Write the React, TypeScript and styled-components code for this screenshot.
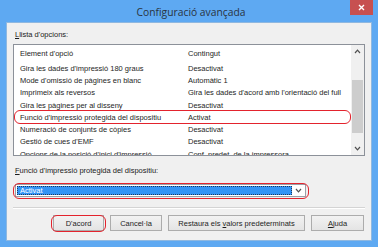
import React from 'react';
import styled, { createGlobalStyle } from 'styled-components';

const GlobalStyle = createGlobalStyle`
  html, body {
    margin: 0;
    padding: 0;
    background: #5ea9f2;
  }
`;

interface OptionRow {
  name: string;
  value: string;
  marked?: boolean;
}

const ROWS: OptionRow[] = [
  { name: "Gira les dades d'impressió 180 graus", value: 'Desactivat' },
  { name: "Mode d'omissió de pàgines en blanc", value: 'Automàtic 1' },
  { name: 'Imprimeix als reversos', value: "Gira les dades d'acord amb l'orientació del full" },
  { name: 'Gira les pàgines per al disseny', value: 'Desactivat' },
  { name: "Funció d'impressió protegida del dispositiu", value: 'Activat', marked: true },
  { name: 'Numeració de conjunts de còpies', value: 'Desactivat' },
  { name: "Gestió de cues d'EMF", value: 'Desactivat' },
  { name: "Opcions de la posició d'inici d'impressió", value: 'Conf. predet. de la impressora' },
];

const Window = styled.div`
  width: 378px;
  height: 247px;
  box-sizing: border-box;
  background: #5ea9f2;
  padding: 0 6px 6px;
  display: flex;
  flex-direction: column;
  font-family: 'Liberation Sans', Arial, sans-serif;
`;

const TitleBar = styled.div`
  position: relative;
  height: 22px;
  display: flex;
  align-items: center;
  justify-content: center;
`;

const Title = styled.span`
  font-family: 'Open Sans', 'Liberation Sans', sans-serif;
  font-size: 10.3px;
  color: #2a3340;
  padding-left: 4px;
  margin-top: 1px;
`;

const CloseButton = styled.div`
  position: absolute;
  top: 0;
  right: -1px;
  width: 23px;
  height: 15px;
  background: #c75050;
  display: flex;
  align-items: center;
  justify-content: center;
`;

const Client = styled.div`
  flex: 1;
  background: #f0f0f0;
  border: 1px solid #8fb8e0;
  padding: 7px 6px 8px;
  display: flex;
  flex-direction: column;
`;

const Label = styled.div<{ $gap: number }>`
  font-size: 7.5px;
  line-height: 10px;
  height: 10px;
  color: #1b1b1b;
  padding-left: 2px;
  margin-bottom: ${p => p.$gap}px;
`;

const Key = styled.span`
  text-decoration: underline;
`;

const ListBox = styled.div`
  height: 112px;
  box-sizing: border-box;
  border: 1px solid #8c9199;
  background: #ffffff;
  display: flex;
  margin-bottom: 10px;
`;

const ListBody = styled.div`
  flex: 1;
  overflow: hidden;
  display: flex;
  flex-direction: column;
`;

const HeaderRow = styled.div`
  height: 17px;
  flex-shrink: 0;
  display: grid;
  grid-template-columns: 168px 1fr;
  align-items: center;
  font-size: 7.5px;
  color: #1e1e1e;
`;

const Row = styled.div<{ $marked?: boolean }>`
  position: relative;
  height: 12.3px;
  flex-shrink: 0;
  display: grid;
  grid-template-columns: 168px 1fr;
  align-items: center;
  font-size: 7.5px;
  color: #1e1e1e;

  &::after {
    content: '';
    display: ${p => (p.$marked ? 'block' : 'none')};
    position: absolute;
    left: 0;
    right: 0;
    top: -1px;
    bottom: -1px;
    border: 1.5px solid #e3232d;
    border-radius: 6px;
  }
`;

const Cell = styled.span`
  padding-left: 6px;
  white-space: nowrap;
  overflow: hidden;
`;

const ScrollBar = styled.div`
  width: 13px;
  flex-shrink: 0;
  background: #f0f0f0;
  display: flex;
  flex-direction: column;
  align-items: center;
`;

const ScrollArrow = styled.div`
  height: 13px;
  width: 13px;
  display: flex;
  align-items: center;
  justify-content: center;
`;

const ScrollTrack = styled.div`
  flex: 1;
  width: 11px;
  padding-top: 22px;
  padding-bottom: 9px;
  box-sizing: border-box;
  display: flex;
  flex-direction: column;
`;

const Thumb = styled.div`
  flex: 1;
  background: #cdcdcd;
`;

const ComboWrap = styled.div`
  position: relative;
  width: 291px;
  margin-left: 2px;
  margin-top: 8px;

  &::after {
    content: '';
    position: absolute;
    left: -2px;
    right: -3px;
    top: -1.5px;
    bottom: -1.5px;
    border: 1.5px solid #e3232d;
    border-radius: 6px;
  }
`;

const Combo = styled.div`
  height: 13px;
  box-sizing: border-box;
  border: 1px solid #9aa0a8;
  background: #ffffff;
  display: flex;
  align-items: stretch;
  padding: 1px;
`;

const ComboValue = styled.div`
  flex: 1;
  background: #3394f5;
  border: 1px dotted #1e3a5a;
  color: #ffffff;
  font-size: 7.5px;
  display: flex;
  align-items: center;
  padding-left: 2px;
`;

const ComboArrow = styled.div`
  width: 12px;
  display: flex;
  align-items: center;
  justify-content: center;
`;

const Separator = styled.div`
  height: 1px;
  background: #d4d4d4;
  border-bottom: 1px solid #ffffff;
  margin: 10px 0 6px;
`;

const ButtonRow = styled.div`
  display: flex;
  justify-content: flex-end;
  gap: 6px;
  padding-right: 1px;
`;

const Button = styled.div<{ $width: number; $marked?: boolean }>`
  position: relative;
  width: ${p => p.$width}px;
  height: 16px;
  box-sizing: border-box;
  border: 1px solid #acacac;
  background: linear-gradient(#f2f2f2, #e4e4e4);
  font-size: 7.5px;
  color: #1e1e1e;
  display: flex;
  align-items: center;
  justify-content: center;

  &::after {
    content: '';
    display: ${p => (p.$marked ? 'block' : 'none')};
    position: absolute;
    left: -3px;
    right: -3px;
    top: -1.5px;
    bottom: -1.5px;
    border: 1.5px solid #e3232d;
    border-radius: 6px;
  }
`;

const Chevron: React.FC<{ up?: boolean }> = ({ up }) => (
  <svg width="7" height="5" viewBox="0 0 7 5">
    <path
      d={up ? 'M1 4 L3.5 1.2 L6 4' : 'M1 1 L3.5 3.8 L6 1'}
      fill="none"
      stroke="#505050"
      strokeWidth="1.2"
    />
  </svg>
);

export default function App() {
  return (
    <>
      <GlobalStyle />
      <Window>
        <TitleBar>
          <Title>Configuració avançada</Title>
          <CloseButton>
            <svg width="7" height="7" viewBox="0 0 7 7">
              <path d="M1 1 L6 6 M6 1 L1 6" stroke="#ffffff" strokeWidth="1.4" />
            </svg>
          </CloseButton>
        </TitleBar>
        <Client>
          <Label $gap={4}>
            <Key>L</Key>lista d'opcions:
          </Label>
          <ListBox>
            <ListBody>
              <HeaderRow>
                <Cell>Element d'opció</Cell>
                <Cell>Contingut</Cell>
              </HeaderRow>
              {ROWS.map(row => (
                <Row key={row.name} $marked={row.marked}>
                  <Cell>{row.name}</Cell>
                  <Cell>{row.value}</Cell>
                </Row>
              ))}
            </ListBody>
            <ScrollBar>
              <ScrollArrow>
                <Chevron up />
              </ScrollArrow>
              <ScrollTrack>
                <Thumb />
              </ScrollTrack>
              <ScrollArrow>
                <Chevron />
              </ScrollArrow>
            </ScrollBar>
          </ListBox>
          <Label $gap={0}>
            <Key>F</Key>unció d'impressió protegida del dispositiu:
          </Label>
          <ComboWrap>
            <Combo>
              <ComboValue>Activat</ComboValue>
              <ComboArrow>
                <Chevron />
              </ComboArrow>
            </Combo>
          </ComboWrap>
          <Separator />
          <ButtonRow>
            <Button $width={51} $marked>D'acord</Button>
            <Button $width={52}>Cancel·la</Button>
            <Button $width={137}>
              Restaura els&nbsp;<Key>v</Key>alors predeterminats
            </Button>
            <Button $width={53}>
              <Key>A</Key>juda
            </Button>
          </ButtonRow>
        </Client>
      </Window>
    </>
  );
}
